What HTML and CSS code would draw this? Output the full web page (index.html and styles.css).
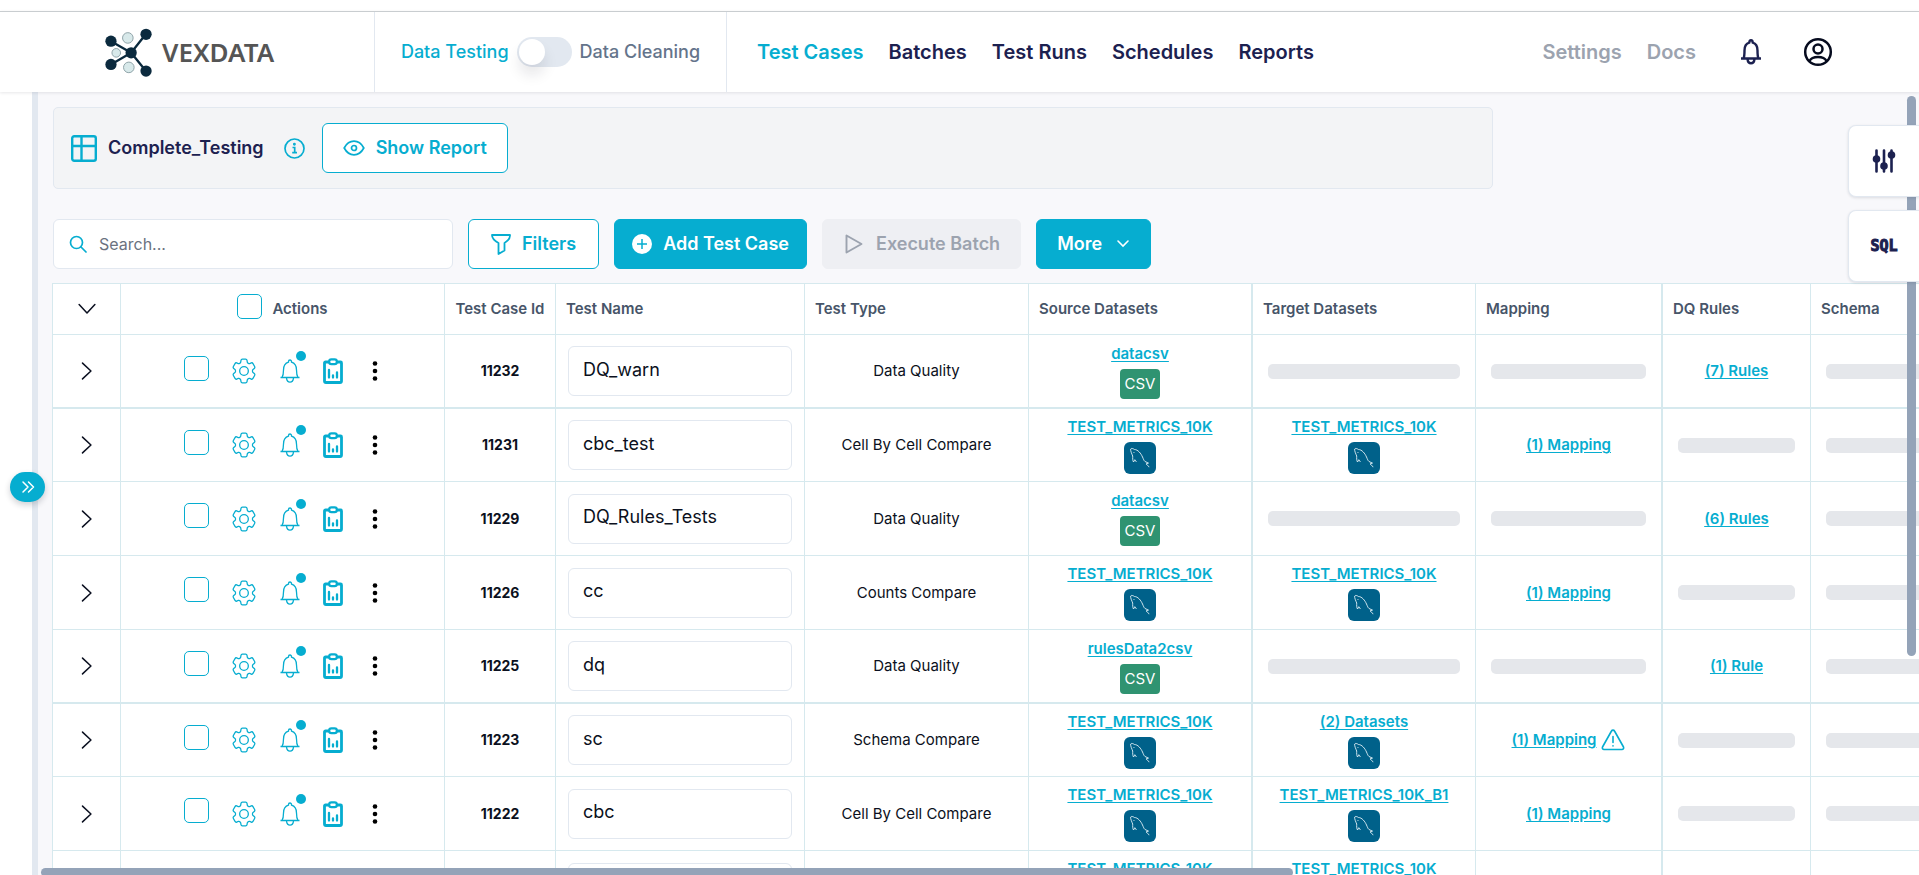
FILE: index.html
```html
<!DOCTYPE html>
<html lang="en">
<head>
<meta charset="utf-8">
<meta name="viewport" content="width=device-width, initial-scale=1">
<title>Vexdata - Test Cases</title>
<link rel="stylesheet" href="styles.css">
</head>
<body>
<svg class="sprite" aria-hidden="true">
  <symbol id="i-chevron" viewBox="0 0 16 16"><path d="M4 1l7.500 7L4 15" fill="none" stroke="currentColor" stroke-width="1.350" stroke-linecap="round" stroke-linejoin="round"/></symbol>
  <symbol id="i-gear" viewBox="0 0 24 24"><path d="M9.594 3.940c.09-.542.560-.940 1.110-.940h2.593c.550 0 1.020.398 1.110.940l.213 1.281c.063.374.313.686.645.870.074.040.147.083.220.127.325.196.720.257 1.075.124l1.217-.456a1.125 1.125 0 0 1 1.370.490l1.296 2.247a1.125 1.125 0 0 1-.260 1.431l-1.003.827c-.293.241-.438.613-.430.992a7.723 7.723 0 0 1 0 .255c-.008.378.137.750.430.991l1.004.827c.424.350.534.955.260 1.430l-1.298 2.247a1.125 1.125 0 0 1-1.369.491l-1.217-.456c-.355-.133-.750-.072-1.076.124a6.470 6.470 0 0 1-.220.128c-.331.183-.581.495-.644.869l-.213 1.281c-.090.543-.560.940-1.110.940h-2.594c-.550 0-1.019-.398-1.110-.940l-.213-1.281c-.062-.374-.312-.686-.644-.870a6.520 6.520 0 0 1-.220-.127c-.325-.196-.720-.257-1.076-.124l-1.217.456a1.125 1.125 0 0 1-1.369-.490l-1.297-2.247a1.125 1.125 0 0 1 .260-1.431l1.004-.827c.292-.240.437-.613.430-.991a6.932 6.932 0 0 1 0-.255c.007-.380-.138-.751-.430-.992l-1.004-.827a1.125 1.125 0 0 1-.260-1.430l1.297-2.247a1.125 1.125 0 0 1 1.370-.491l1.216.456c.356.133.751.072 1.076-.124.072-.044.146-.086.220-.128.332-.183.582-.495.644-.869z" fill="none" stroke="currentColor" stroke-linejoin="round" transform="matrix(1.160 0 0 1.220 -1.920 -2.640)"/><circle cx="12" cy="12" r="4" fill="none" stroke="currentColor" stroke-width="1.200"/></symbol>
  <symbol id="i-bell" viewBox="0 0 22 26"><path d="M1.500 19.500h19M3 19.500c1.300-2 1.500-4.500 1.500-7.500 0-4 2.200-7 5-7.800V3.500a1.500 1.500 0 0 1 3 0v.7c2.800.8 5 3.800 5 7.800 0 3 .2 5.500 1.500 7.500M7.500 20.200c.3 2.500 1.700 4 3.500 4s3.200-1.500 3.500-4" fill="none" stroke="currentColor" stroke-width="1.300" stroke-linejoin="round"/></symbol>
  <symbol id="i-clip" viewBox="0 0 20 26"><path d="M6 4H2.500A1 1 0 0 0 1.500 5v18a1.500 1.500 0 0 0 1.500 1.500h14a1.500 1.500 0 0 0 1.500-1.500V5a1 1 0 0 0-1-1H14" fill="none" stroke="currentColor" stroke-width="2.800"/><rect x="6.200" y="1.400" width="7.600" height="4.800" rx="2.200" fill="#fff" stroke="currentColor" stroke-width="2.200"/><path d="M6 12v7.500M10 17.500v2M14 14.500v5" stroke="currentColor" stroke-width="2.300" stroke-linecap="round"/></symbol>
  <symbol id="i-dots" viewBox="0 0 6 20"><circle cx="3" cy="2.500" r="2.300"/><circle cx="3" cy="10" r="2.300"/><circle cx="3" cy="17.500" r="2.300"/></symbol>
  <symbol id="i-mysql" viewBox="0 0 32 32"><rect width="32" height="32" rx="6" fill="#00618a"/><path d="M9.500 20c-1-1.500-.8-4-.8-6-.8-2-2.500-5.500-2-7 .5-1 2.500-.5 3.700.5 3.500 0 6.600 4 8.100 7.500 1 2.300 1.500 3.800 2.500 4.500l3.500 1.600-2.500.8c1 1.200 2.500 1.500 3 3.300M9.500 20c.5-.5.800-1.500 1.300-2.300.9 1 1.200 2 1.700 2.300M9.500 10l.8.9" fill="none" stroke="#e3f1f6" stroke-width=".9" stroke-linejoin="round"/></symbol>
</svg>
<div class="app">
  <header class="top">
    <a class="brand" href="#" aria-label="Vexdata home">
      <svg class="brand-mark" viewBox="46 36 142 148" aria-hidden="true">
        <path d="M64 76l61 35 44-56M64 146l61-35 44 54" fill="none" stroke="#0b2a3e" stroke-width="7"/>
        <g fill="#0b2a3e"><circle cx="64" cy="76" r="17"/><circle cx="170" cy="55" r="17"/><circle cx="64" cy="146" r="17"/><circle cx="170" cy="166" r="17"/><circle cx="125" cy="111" r="17"/></g>
        <g fill="#d8e9ea" stroke="#8fa3a8" stroke-width="3"><circle cx="115" cy="66" r="16"/><circle cx="80" cy="111" r="13"/><circle cx="118" cy="155" r="16"/></g>
      </svg>
      <span class="brand-name">VEXDATA</span>
    </a>
    <div class="mode">
      <span class="mode-on">Data Testing</span>
      <label class="switch"><input type="checkbox" aria-label="Switch to Data Cleaning"><span class="knob"></span></label>
      <span class="mode-off">Data Cleaning</span>
    </div>
    <nav class="nav">
      <a class="active" href="#">Test Cases</a><a href="#">Batches</a><a href="#">Test Runs</a><a href="#">Schedules</a><a href="#">Reports</a>
    </nav>
    <div class="tools">
      <a href="#">Settings</a><a href="#">Docs</a>
      <button class="plain bell-btn" aria-label="Notifications"><svg width="24" height="28" viewBox="0 0 24 28" fill="none" stroke="#1c2150" stroke-width="2.400" stroke-linejoin="round"><path d="M2 20.500h20M4.500 20.500c1-2 1-4.500 1-8 0-4 2-7 4.800-7.800C10.300 3 11 2.200 12 2.200s1.700.8 1.700 2.500c2.800.8 4.800 3.800 4.800 7.800 0 3.500 0 6 1 8M8.500 21c.3 2.800 1.600 4.300 3.500 4.300s3.200-1.500 3.500-4.300"/></svg></button>
      <button class="plain" aria-label="Account"><svg width="30" height="30" viewBox="0 0 30 30" fill="none" stroke="#060b1e" stroke-width="2.500"><circle cx="15" cy="15" r="12.800"/><circle cx="15" cy="12" r="4.500"/><path d="M6.500 24c1.500-3 4-4 8.500-4s7 1 8.500 4"/></svg></button>
    </div>
  </header>

  <div class="body">
    <aside class="side"><button class="expand" aria-label="Expand sidebar"><svg width="14" height="14" viewBox="0 0 14 14" fill="none" stroke="#fff" stroke-width="1.500" stroke-linecap="round" stroke-linejoin="round"><path d="M2 2l5 5-5 5M7.500 2l5 5-5 5"/></svg></button></aside>
    <main class="main">
      <section class="suite">
        <svg width="26" height="27" viewBox="0 0 26 27" fill="none" stroke="#06add0" stroke-width="2.400"><rect x="1.200" y="1.200" width="23.600" height="24.600" rx="2"/><path d="M1 11h24M10.500 1v25"/></svg>
        <h1>Complete_Testing</h1>
        <button class="plain info" aria-label="Details"><svg width="21" height="21" viewBox="0 0 21 21" fill="none" stroke="#06add0" stroke-width="1.700"><circle cx="10.500" cy="10.500" r="9.500"/><path d="M8.500 9.500h2.200v5M8.200 14.700h4.800" /><circle cx="10.400" cy="6.200" r=".6" fill="#06add0"/></svg></button>
        <button class="btn outline report"><svg width="22" height="16" viewBox="0 0 22 16" fill="none" stroke="currentColor" stroke-width="1.700"><path d="M1.200 8C3.500 3.700 7 1.200 11 1.200S18.500 3.700 20.800 8c-2.300 4.300-5.800 6.800-9.800 6.800S3.500 12.300 1.200 8z"/><circle cx="11" cy="8" r="2.500"/></svg>Show Report</button>
      </section>

      <div class="bar">
        <label class="search"><svg width="18" height="18" viewBox="0 0 18 18" fill="none" stroke="#06add0" stroke-width="1.700" stroke-linecap="round"><circle cx="7.500" cy="7.500" r="6"/><path d="M12 12l5 5"/></svg><input type="text" placeholder="Search..." aria-label="Search"></label>
        <button class="btn outline filters"><svg width="20" height="22" viewBox="0 0 20 22" fill="none" stroke="currentColor" stroke-width="1.800" stroke-linejoin="round"><path d="M1 2h18c.3 3.500-1.500 5.500-5.500 8v7.500L7.500 21V10C3 7.500 1 5.500 1 2z"/></svg>Filters</button>
        <button class="btn solid add"><svg width="20" height="20" viewBox="0 0 20 20"><circle cx="10" cy="10" r="10" fill="#fff"/><path d="M10 5v10M5 10h10" stroke="#06add0" stroke-width="1.500"/></svg>Add Test Case</button>
        <button class="btn off" disabled><svg width="18" height="20" viewBox="0 0 18 20" fill="none" stroke="currentColor" stroke-width="1.900" stroke-linejoin="round"><path d="M1.500 1.500v17L16.500 10z"/></svg>Execute Batch</button>
        <button class="btn solid more">More<svg width="14" height="10" viewBox="0 0 14 10" fill="none" stroke="#fff" stroke-width="1.600" stroke-linecap="round"><path d="M2 2l5 5 5-5"/></svg></button>
      </div>

      <table class="grid">
        <colgroup><col class="w-exp"><col class="w-act"><col class="w-id"><col class="w-name"><col class="w-data"><col class="w-data"><col class="w-target"><col class="w-map"><col class="w-dq"><col class="w-schema"></colgroup>
        <thead><tr>
          <th class="mid"><button class="plain" aria-label="Expand all"><svg class="chev down"><use href="#i-chevron"/></svg></button></th>
          <th class="mid"><label class="pick"><input class="box" type="checkbox"><span>Actions</span></label></th>
          <th class="mid">Test Case Id</th><th>Test Name</th><th>Test Type</th><th class="thick">Source Datasets</th><th>Target Datasets</th><th class="thick">Mapping</th><th>DQ Rules</th><th>Schema</th>
        </tr></thead>
        <tbody>
        <tr class="heavy">
          <td><button class="plain" aria-label="Expand"><svg class="chev"><use href="#i-chevron"/></svg></button></td>
          <td><div class="acts"><input class="box" type="checkbox" aria-label="Select 11232"><button class="plain" aria-label="Settings"><svg class="gear"><use href="#i-gear"/></svg></button><button class="plain alert" aria-label="Alerts"><svg class="bell"><use href="#i-bell"/></svg></button><button class="plain" aria-label="Report"><svg class="clip"><use href="#i-clip"/></svg></button><button class="plain" aria-label="More actions"><svg class="dots"><use href="#i-dots"/></svg></button></div></td>
          <td class="id">11232</td><td><input class="name" type="text" value="DQ_warn" aria-label="Test name"></td><td>Data Quality</td>
          <td class="thick"><div class="ds"><a href="#">datacsv</a><span class="csv">CSV</span></div></td><td><div class="none"></div></td><td class="thick"><div class="none"></div></td><td><a href="#">(7) Rules</a></td><td><div class="none"></div></td>
        </tr>
        <tr>
          <td><button class="plain" aria-label="Expand"><svg class="chev"><use href="#i-chevron"/></svg></button></td>
          <td><div class="acts"><input class="box" type="checkbox" aria-label="Select 11231"><button class="plain" aria-label="Settings"><svg class="gear"><use href="#i-gear"/></svg></button><button class="plain alert" aria-label="Alerts"><svg class="bell"><use href="#i-bell"/></svg></button><button class="plain" aria-label="Report"><svg class="clip"><use href="#i-clip"/></svg></button><button class="plain" aria-label="More actions"><svg class="dots"><use href="#i-dots"/></svg></button></div></td>
          <td class="id">11231</td><td><input class="name" type="text" value="cbc_test" aria-label="Test name"></td><td>Cell By Cell Compare</td>
          <td class="thick"><div class="ds"><a href="#">TEST_METRICS_10K</a><svg class="db"><use href="#i-mysql"/></svg></div></td><td><div class="ds"><a href="#">TEST_METRICS_10K</a><svg class="db"><use href="#i-mysql"/></svg></div></td><td class="thick"><a href="#">(1) Mapping</a></td><td><div class="none"></div></td><td><div class="none"></div></td>
        </tr>
        <tr>
          <td><button class="plain" aria-label="Expand"><svg class="chev"><use href="#i-chevron"/></svg></button></td>
          <td><div class="acts"><input class="box" type="checkbox" aria-label="Select 11229"><button class="plain" aria-label="Settings"><svg class="gear"><use href="#i-gear"/></svg></button><button class="plain alert" aria-label="Alerts"><svg class="bell"><use href="#i-bell"/></svg></button><button class="plain" aria-label="Report"><svg class="clip"><use href="#i-clip"/></svg></button><button class="plain" aria-label="More actions"><svg class="dots"><use href="#i-dots"/></svg></button></div></td>
          <td class="id">11229</td><td><input class="name" type="text" value="DQ_Rules_Tests" aria-label="Test name"></td><td>Data Quality</td>
          <td class="thick"><div class="ds"><a href="#">datacsv</a><span class="csv">CSV</span></div></td><td><div class="none"></div></td><td class="thick"><div class="none"></div></td><td><a href="#">(6) Rules</a></td><td><div class="none"></div></td>
        </tr>
        <tr>
          <td><button class="plain" aria-label="Expand"><svg class="chev"><use href="#i-chevron"/></svg></button></td>
          <td><div class="acts"><input class="box" type="checkbox" aria-label="Select 11226"><button class="plain" aria-label="Settings"><svg class="gear"><use href="#i-gear"/></svg></button><button class="plain alert" aria-label="Alerts"><svg class="bell"><use href="#i-bell"/></svg></button><button class="plain" aria-label="Report"><svg class="clip"><use href="#i-clip"/></svg></button><button class="plain" aria-label="More actions"><svg class="dots"><use href="#i-dots"/></svg></button></div></td>
          <td class="id">11226</td><td><input class="name" type="text" value="cc" aria-label="Test name"></td><td>Counts Compare</td>
          <td class="thick"><div class="ds"><a href="#">TEST_METRICS_10K</a><svg class="db"><use href="#i-mysql"/></svg></div></td><td><div class="ds"><a href="#">TEST_METRICS_10K</a><svg class="db"><use href="#i-mysql"/></svg></div></td><td class="thick"><a href="#">(1) Mapping</a></td><td><div class="none"></div></td><td><div class="none"></div></td>
        </tr>
        <tr class="heavy">
          <td><button class="plain" aria-label="Expand"><svg class="chev"><use href="#i-chevron"/></svg></button></td>
          <td><div class="acts"><input class="box" type="checkbox" aria-label="Select 11225"><button class="plain" aria-label="Settings"><svg class="gear"><use href="#i-gear"/></svg></button><button class="plain alert" aria-label="Alerts"><svg class="bell"><use href="#i-bell"/></svg></button><button class="plain" aria-label="Report"><svg class="clip"><use href="#i-clip"/></svg></button><button class="plain" aria-label="More actions"><svg class="dots"><use href="#i-dots"/></svg></button></div></td>
          <td class="id">11225</td><td><input class="name" type="text" value="dq" aria-label="Test name"></td><td>Data Quality</td>
          <td class="thick"><div class="ds"><a href="#">rulesData2csv</a><span class="csv">CSV</span></div></td><td><div class="none"></div></td><td class="thick"><div class="none"></div></td><td><a href="#">(1) Rule</a></td><td><div class="none"></div></td>
        </tr>
        <tr>
          <td><button class="plain" aria-label="Expand"><svg class="chev"><use href="#i-chevron"/></svg></button></td>
          <td><div class="acts"><input class="box" type="checkbox" aria-label="Select 11223"><button class="plain" aria-label="Settings"><svg class="gear"><use href="#i-gear"/></svg></button><button class="plain alert" aria-label="Alerts"><svg class="bell"><use href="#i-bell"/></svg></button><button class="plain" aria-label="Report"><svg class="clip"><use href="#i-clip"/></svg></button><button class="plain" aria-label="More actions"><svg class="dots"><use href="#i-dots"/></svg></button></div></td>
          <td class="id">11223</td><td><input class="name" type="text" value="sc" aria-label="Test name"></td><td>Schema Compare</td>
          <td class="thick"><div class="ds"><a href="#">TEST_METRICS_10K</a><svg class="db"><use href="#i-mysql"/></svg></div></td><td><div class="ds"><a href="#">(2) Datasets</a><svg class="db"><use href="#i-mysql"/></svg></div></td><td class="thick"><div class="warned"><a href="#">(1) Mapping</a><svg width="24" height="22" viewBox="0 0 24 22" fill="none" stroke="#06add0" stroke-width="1.600" stroke-linejoin="round" stroke-linecap="round"><path d="M10.500 2a1.700 1.700 0 0 1 3 0l9 16c.6 1.200-.2 2.500-1.500 2.500H3C1.700 20.500.9 19.200 1.500 18zM12 7.500v6M12 16.800v.2"/></svg></div></td><td><div class="none"></div></td><td><div class="none"></div></td>
        </tr>
        <tr>
          <td><button class="plain" aria-label="Expand"><svg class="chev"><use href="#i-chevron"/></svg></button></td>
          <td><div class="acts"><input class="box" type="checkbox" aria-label="Select 11222"><button class="plain" aria-label="Settings"><svg class="gear"><use href="#i-gear"/></svg></button><button class="plain alert" aria-label="Alerts"><svg class="bell"><use href="#i-bell"/></svg></button><button class="plain" aria-label="Report"><svg class="clip"><use href="#i-clip"/></svg></button><button class="plain" aria-label="More actions"><svg class="dots"><use href="#i-dots"/></svg></button></div></td>
          <td class="id">11222</td><td><input class="name" type="text" value="cbc" aria-label="Test name"></td><td>Cell By Cell Compare</td>
          <td class="thick"><div class="ds"><a href="#">TEST_METRICS_10K</a><svg class="db"><use href="#i-mysql"/></svg></div></td><td><div class="ds"><a href="#">TEST_METRICS_10K_B1</a><svg class="db"><use href="#i-mysql"/></svg></div></td><td class="thick"><a href="#">(1) Mapping</a></td><td><div class="none"></div></td><td><div class="none"></div></td>
        </tr>
        <tr>
          <td></td>
          <td><div class="acts"><input class="box" type="checkbox" aria-label="Select row"><button class="plain" aria-label="Settings"><svg class="gear"><use href="#i-gear"/></svg></button><button class="plain alert" aria-label="Alerts"><svg class="bell"><use href="#i-bell"/></svg></button><button class="plain" aria-label="Report"><svg class="clip"><use href="#i-clip"/></svg></button><button class="plain" aria-label="More actions"><svg class="dots"><use href="#i-dots"/></svg></button></div></td>
          <td class="id"></td><td><input class="name" type="text" aria-label="Test name"></td><td></td>
          <td class="thick"><div class="ds"><a href="#">TEST_METRICS_10K</a><svg class="db"><use href="#i-mysql"/></svg></div></td><td><div class="ds"><a href="#">TEST_METRICS_10K</a><svg class="db"><use href="#i-mysql"/></svg></div></td><td class="thick"></td><td></td><td></td>
        </tr>
        </tbody>
      </table>
    </main>
    <div class="scroll-y"></div>
    <div class="scroll-x"></div>
    <div class="dock">
      <button class="tab" aria-label="Parameters"><svg width="24" height="24" viewBox="0 0 24 24" fill="none" stroke="#1c2150" stroke-width="2.600" stroke-linecap="round"><path d="M4.500 1.500v21M12 1.500v21M19.500 1.500v21"/><g fill="#1c2150" stroke="none"><circle cx="4.500" cy="10" r="3.800"/><circle cx="12" cy="17" r="3.800"/><circle cx="19.500" cy="6" r="3.800"/></g></svg></button>
      <button class="tab sql">SQL</button>
    </div>
  </div>
</div>
</body>
</html>
```

FILE: styles.css
```css
:root {
  --cyan: #06add0;
  --navy: #1c2150;
  --line: #d6e9ee;
  --soft: #e2e8f0;
}
* { box-sizing: border-box; }
body {
  margin: 0;
  font-family: Inter, "Open Sans", "Liberation Sans", sans-serif;
  font-size: 15px;
  line-height: 20px;
  color: #0b1020;
  background: #fff;
}
button, input { font: inherit; color: inherit; }
button { cursor: pointer; }
a { color: var(--cyan); }
svg { display: block; flex: none; }
.sprite { position: absolute; width: 0; height: 0; }
.plain { border: 0; padding: 0; background: none; display: block; }

.app { display: flex; flex-direction: column; height: 100vh; padding-top: 11px; overflow: hidden; }

/* Header */
.top {
  display: flex;
  flex: none;
  height: 81px;
  border-top: 1px solid #c9cdd0;
  background: #fff;
  box-shadow: 0 1px 3px rgba(15, 23, 42, .1);
  position: relative;
  z-index: 1;
}
.brand {
  display: flex;
  flex: none;
  align-items: center;
  gap: 10px;
  width: 375px;
  padding-left: 105px;
  border-right: 1px solid var(--soft);
  text-decoration: none;
}
.brand-mark { width: 47px; height: 49px; }
.brand-name { font: 600 26px/32px "Noto Sans", sans-serif; color: #555; }
.mode {
  display: flex;
  flex: none;
  align-items: center;
  justify-content: center;
  gap: 8px;
  width: 352px;
  border-right: 1px solid var(--soft);
  font-size: 18px;
  font-weight: 500;
  white-space: nowrap;
}
.mode-on { color: var(--cyan); }
.mode-off { color: #64748b; }
.switch { width: 55px; height: 30px; padding: 2px; border-radius: 15px; background: var(--soft); }
.switch input { position: absolute; opacity: 0; }
.knob { display: block; width: 26px; height: 26px; border-radius: 50%; background: #fff; box-shadow: 0 10px 14px rgba(15, 23, 42, .1); }
.nav { display: flex; align-items: center; gap: 25px; padding-left: 30px; font-size: 20px; font-weight: 600; white-space: nowrap; }
.nav a { color: var(--navy); text-decoration: none; }
.nav a.active { color: var(--cyan); }
.tools { display: flex; align-items: center; gap: 25px; margin-left: auto; padding-right: 86px; font-size: 20px; font-weight: 600; }
.tools a { color: #9ca3af; text-decoration: none; }
.bell-btn { margin: 0 15px 0 18px; }

/* Page body */
.body { display: flex; flex: 1; min-height: 0; position: relative; overflow: hidden; }
.side { flex: none; width: 38px; border-right: 6px solid var(--soft); background: #fff; }
.expand {
  position: absolute;
  left: 10px;
  top: 380px;
  display: flex;
  align-items: center;
  justify-content: center;
  width: 35px;
  height: 30px;
  border: 0;
  border-radius: 15px;
  background: var(--cyan);
  box-shadow: 0 3px 6px rgba(15, 23, 42, .2);
}
.main { flex: 1; min-width: 0; padding: 15px 0 0 14px; background: #f8f8fb; overflow: hidden; }
.suite {
  display: flex;
  align-items: center;
  max-width: 1440px;
  height: 82px;
  margin-left: 1px;
  padding: 0 17px;
  border: 1px solid var(--soft);
  border-radius: 5px;
  background: #f3f4f6;
}
.suite h1 { margin: 0 20px 0 11px; font-size: 18px; line-height: 24px; font-weight: 600; color: var(--navy); }

.btn {
  display: flex;
  align-items: center;
  justify-content: center;
  gap: 11px;
  height: 50px;
  padding: 0 20px;
  border: 1px solid var(--cyan);
  border-radius: 6px;
  font-size: 18px;
  font-weight: 600;
  white-space: nowrap;
}
.outline { background: #fff; color: var(--cyan); }
.solid { background: var(--cyan); color: #fff; }
.off { padding: 0 20px 0 22px; gap: 13px; background: #eeeff3; border-color: #eeeff3; color: #9ca3af; }
.report { margin-left: 17px; }
.filters { padding: 0 22px; }
.add { padding: 0 17px; }
.more { gap: 14px; }
.bar { display: flex; gap: 15px; margin: 30px 0 14px 1px; }
.search {
  display: flex;
  align-items: center;
  gap: 12px;
  width: 400px;
  height: 50px;
  padding: 0 15px;
  border: 1px solid var(--soft);
  border-radius: 6px;
  background: #fff;
}
.search input { flex: 1; min-width: 0; border: 0; padding: 0; outline: 0; background: none; font-size: 16px; }
.search input::placeholder { color: #6b7280; opacity: 1; }

/* Test case table */
.grid { table-layout: fixed; width: 1907px; border-collapse: separate; border-spacing: 0; background: #fff; border-top: 1px solid var(--line); border-left: 1px solid var(--line); }
.w-exp { width: 68px; }
.w-act { width: 324px; }
.w-id { width: 111px; }
.w-name { width: 249px; }
.w-data { width: 224px; }
.w-target { width: 223px; }
.w-map { width: 187px; }
.w-dq { width: 148px; }
.w-schema { width: 148px; }
.grid th, .grid td { border-right: 1px solid var(--line); border-bottom: 1px solid var(--line); }
.grid .thick { border-right-width: 2px; }
.grid .heavy td { border-bottom-width: 2px; }
.grid th { height: 51px; padding: 0 10px; text-align: left; font-weight: 600; color: #475569; white-space: nowrap; }
.grid .mid { text-align: center; padding: 0; }
.grid td { height: 74px; padding: 0 12px; text-align: center; }
.grid tr:nth-child(4n + 2) td { height: 73px; }
.grid td a { font-weight: 600; text-underline-offset: 2px; }
.grid td.id { font-size: 14px; font-weight: 700; }
.grid .plain { margin: 0 auto; }
.grid .acts .plain { margin: 0; }
.chev { width: 18px; height: 18px; color: #0b1020; }
.down { transform: rotate(90deg); }
.pick { display: flex; align-items: center; justify-content: center; gap: 10px; }
.box {
  appearance: none;
  flex: none;
  width: 25px;
  height: 25px;
  margin: 0 0 6px;
  border: 1px solid var(--cyan);
  border-radius: 5px;
  background: #fff;
}
.acts { display: flex; align-items: center; justify-content: center; gap: 22px; padding-right: 4px; color: var(--cyan); }
.gear { width: 26px; height: 28px; }
.bell { width: 22px; height: 26px; }
.alert { position: relative; }
.alert::after { content: ""; position: absolute; top: -7px; right: -5px; width: 10px; height: 10px; border-radius: 50%; background: var(--cyan); }
.clip { width: 20px; height: 26px; }
.dots { width: 6px; height: 20px; margin-left: 7px; fill: #000; }
.name { display: block; width: 100%; height: 50px; padding: 0 14px 4px; border: 1px solid var(--soft); border-radius: 6px; background: #fff; font-size: 18px; }
.ds { display: flex; flex-direction: column; align-items: center; gap: 5px; }
.csv { padding: 5px; border-radius: 4px; background: #2f9371; color: #fff; font-size: 15px; }
.db { width: 32px; height: 32px; }
.none { height: 15px; margin: 0 3px; border-radius: 5px; background: #e5e7eb; }
.warned { display: flex; align-items: center; justify-content: center; gap: 5px; }

/* Overlays */
.scroll-y { position: absolute; right: 3px; top: 4px; width: 9px; height: 560px; border-radius: 5px; background: #94a3b8; }
.scroll-x { position: absolute; left: 41px; right: 626px; bottom: -2px; height: 9px; border-radius: 5px; background: #94a3b8; }
.dock { position: absolute; right: 0; top: 33px; display: grid; gap: 13px; }
.tab {
  display: flex;
  align-items: center;
  justify-content: center;
  width: 71px;
  height: 72px;
  border: 1px solid var(--soft);
  border-right: 0;
  border-radius: 8px 0 0 8px;
  background: #fff;
  box-shadow: 0 1px 3px rgba(15, 23, 42, .12);
}
.sql { font: 700 15px/20px "DejaVu Sans Mono", monospace; color: var(--navy); -webkit-text-stroke: 1px var(--navy); }
```
